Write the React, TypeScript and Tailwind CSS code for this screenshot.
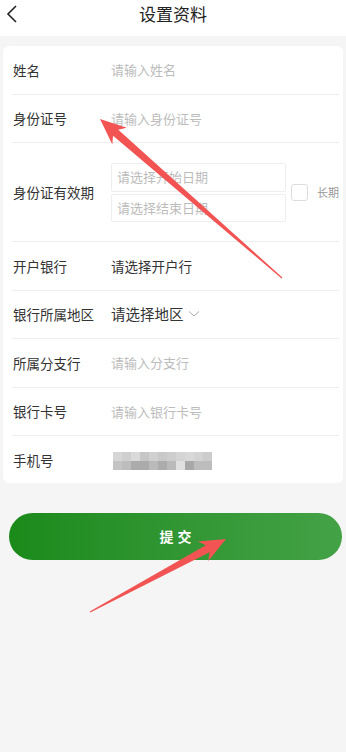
import React from "react";

const font = { fontFamily: '"Noto Sans CJK SC", "Noto Sans", sans-serif' };

function arrowPoints(tx: number, ty: number, hx: number, hy: number, L: number, W: number, w1: number, w0: number) {
  const dx = hx - tx, dy = hy - ty;
  const len = Math.hypot(dx, dy);
  const ux = dx / len, uy = dy / len;
  const px = -uy, py = ux;
  const bx = hx - ux * L, by = hy - uy * L;
  const nx = hx - ux * (L * 0.8), ny = hy - uy * (L * 0.8);
  const pts = [
    [tx + px * w0, ty + py * w0],
    [nx + px * w1, ny + py * w1],
    [bx + px * W, by + py * W],
    [hx, hy],
    [bx - px * W, by - py * W],
    [nx - px * w1, ny - py * w1],
    [tx - px * w0, ty - py * w0],
  ];
  return pts.map((p) => p.join(",")).join(" ");
}

function Row({ label, children, last }: { label: string; children: React.ReactNode; last?: boolean }) {
  return (
    <div className={"flex items-center h-[48.5px] ml-[9px] mr-[4px] " + (last ? "" : "border-b border-[#eeeeee]")}>
      <div className="w-[99px] pl-[1px] text-[13.5px] text-[#333333] shrink-0 whitespace-nowrap">{label}</div>
      <div className="flex-1 flex items-center">{children}</div>
    </div>
  );
}

const ph = "text-[13px] text-[#bcbcbc] whitespace-nowrap";

export default function App() {
  const blocks1 = ["#d6d6d6", "#cfcfcf", "#dadada", "#c6c6c6", "#d0d0d0", "#c9c9c9", "#cdcdcd", "#d4d4d4", "#d8d8d8", "#d3d3d3", "#cccccc"];
  const blocks2 = ["#c4c4c4", "#bdbdbd", "#ababab", "#ababab", "#bababa", "#acacac", "#bababa", "#e0e0e0", "#a8a8a8", "#bdbdbd", "#bdbdbd"];
  return (
    <div className="relative w-[346px] h-[752px] bg-[#f5f5f5] overflow-hidden" style={font}>
      <div className="h-[36px] bg-white flex items-center justify-center relative">
        <svg className="absolute left-[5px] top-[5px]" width="14" height="18" viewBox="0 0 14 18">
          <polyline points="11,1 3,9 11,17" fill="none" stroke="#222" strokeWidth="1.6" />
        </svg>
        <div className="text-[17px] text-[#222222] -mt-[9px]">设置资料</div>
      </div>
      <div className="mt-[10px] ml-[3px] mr-[3px] bg-white rounded-[6px] h-[437px]">
        <Row label="姓名"><span className={ph}>请输入姓名</span></Row>
        <Row label="身份证号"><span className={ph}>请输入身份证号</span></Row>
        <div className="flex items-center h-[99px] ml-[9px] mr-[4px] border-b border-[#eeeeee]">
          <div className="w-[99px] pl-[1px] text-[13.5px] text-[#333333] shrink-0 whitespace-nowrap">身份证有效期</div>
          <div className="flex flex-col gap-[2px] w-[175px] shrink-0">
            <div className="h-[29px] border border-[#eeeeee] rounded-[2px] flex items-center pl-[5px]"><span className={ph}>请选择开始日期</span></div>
            <div className="h-[28px] border border-[#eeeeee] rounded-[2px] flex items-center pl-[5px]"><span className={ph}>请选择结束日期</span></div>
          </div>
          <div className="ml-[5px] w-[17px] h-[17px] border border-[#dddddd] rounded-[3px] shrink-0"></div>
          <span className="ml-[9px] text-[11px] text-[#999999] whitespace-nowrap shrink-0">长期</span>
        </div>
        <Row label="开户银行"><span className="text-[13.5px] text-[#333333] whitespace-nowrap">请选择开户行</span></Row>
        <Row label="银行所属地区">
          <span className="text-[14.5px] text-[#333333] whitespace-nowrap">请选择地区</span>
          <svg className="ml-[4px]" width="12" height="8" viewBox="0 0 12 8">
            <polyline points="1,1.5 6,6 11,1.5" fill="none" stroke="#aaaaaa" strokeWidth="1" />
          </svg>
        </Row>
        <Row label="所属分支行"><span className={ph}>请输入分支行</span></Row>
        <Row label="银行卡号"><span className={ph}>请输入银行卡号</span></Row>
        <Row label="手机号" last>
          <div className="flex flex-col ml-[2px] mt-[2px]">
            <div className="flex">{blocks1.map((c, i) => <div key={i} className="w-[9px] h-[9px]" style={{ background: c }} />)}</div>
            <div className="flex">{blocks2.map((c, i) => <div key={i} className="w-[9px] h-[9px]" style={{ background: c }} />)}</div>
          </div>
        </Row>
      </div>
      <div className="mt-[30px] ml-[9px] mr-[4px] h-[47px] rounded-full bg-gradient-to-r from-[#1a8a1a] to-[#43a246] flex items-center justify-center">
        <span className="text-white text-[14px] font-bold tracking-[4px] pl-[4px]">提交</span>
      </div>
      <svg className="absolute left-0 top-0 pointer-events-none" width="346" height="752">
        <polygon points={arrowPoints(282, 278, 100, 119, 26, 11, 4, 0.6)} fill="#f25454" />
        <polygon points={arrowPoints(90, 612, 226, 539, 26, 11, 4, 0.6)} fill="#f25454" />
      </svg>
    </div>
  );
}
